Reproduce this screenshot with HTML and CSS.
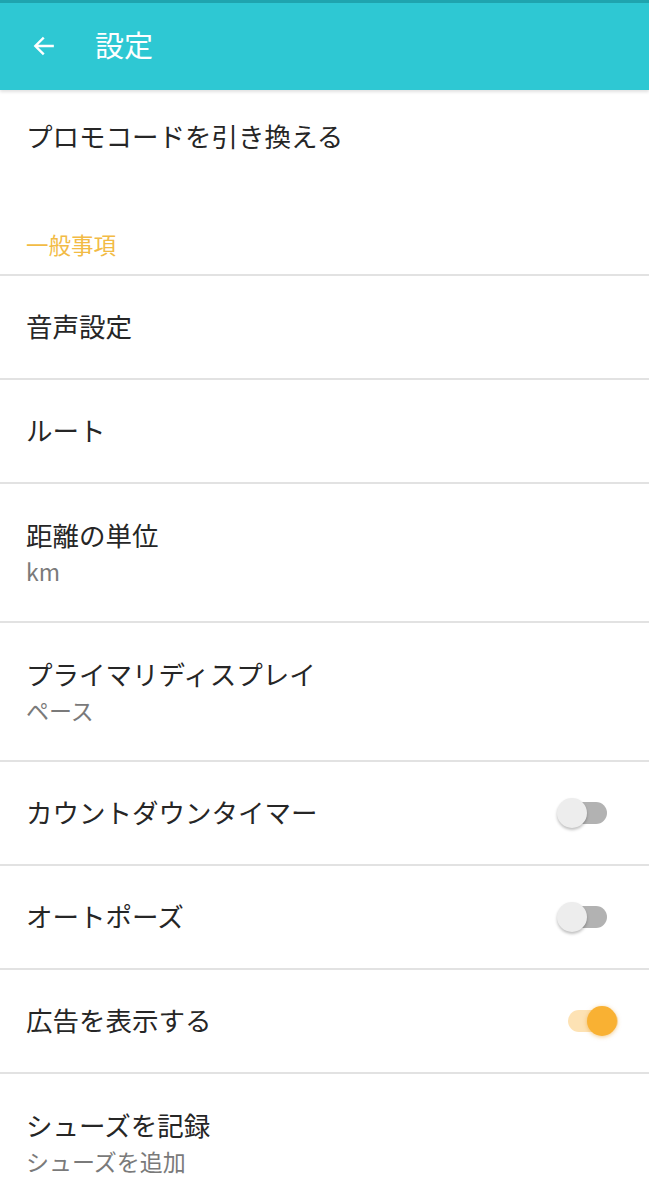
FILE: index.html
```html
<!DOCTYPE html>
<html lang="ja">
<head>
<meta charset="UTF-8">
<meta name="viewport" content="width=device-width, initial-scale=1.0">
<title>設定</title>
<link rel="stylesheet" href="styles.css">
</head>
<body>
<div class="app">
    <header class="toolbar">
        <svg class="back" width="26" height="26" viewBox="0 0 24 24">
            <path d="M20 12H4.5M11 5l-7 7 7 7" fill="none" stroke="#fff" stroke-width="2.2" stroke-linecap="square"/>
        </svg>
        <h1>設定</h1>
    </header>

    <div class="row promo">プロモコードを引き換える</div>

    <div class="category">一般事項</div>

    <div class="row">音声設定</div>
    <div class="row">ルート</div>
    <div class="row two-line">
        <div class="title">距離の単位</div>
        <div class="summary">km</div>
    </div>
    <div class="row two-line">
        <div class="title">プライマリディスプレイ</div>
        <div class="summary">ペース</div>
    </div>
    <div class="row">
        <span>カウントダウンタイマー</span>
        <div class="switch"><div class="track"></div><div class="thumb"></div></div>
    </div>
    <div class="row">
        <span>オートポーズ</span>
        <div class="switch"><div class="track"></div><div class="thumb"></div></div>
    </div>
    <div class="row">
        <span>広告を表示する</span>
        <div class="switch on"><div class="track"></div><div class="thumb"></div></div>
    </div>
    <div class="row two-line last">
        <div class="title">シューズを記録</div>
        <div class="summary">シューズを追加</div>
    </div>
</div>
</body>
</html>
```

FILE: styles.css
```css
* {
    box-sizing: border-box;
    margin: 0;
    padding: 0;
}

body {
    background: #fff;
    color: #262626;
    font-family: "Noto Sans CJK JP", "Noto Sans", sans-serif;
}

.app {
    width: 649px;
    overflow: hidden;
}

.toolbar {
    height: 90px;
    background: #2ec8d3;
    border-top: 3px solid #1fa4ae;
    display: flex;
    align-items: center;
    padding-left: 31px;
    box-shadow: 0 2px 3px rgba(0, 0, 0, 0.12);
    position: relative;
}

.toolbar .back {
    display: block;
    margin-top: -2px;
}

.toolbar h1 {
    font-size: 29px;
    font-weight: normal;
    color: #fff;
    margin-left: 38px;
    line-height: 1;
    margin-top: -4px;
}

.row {
    height: 104px;
    display: flex;
    align-items: center;
    justify-content: space-between;
    padding: 0 26px 3px;
    font-size: 26.5px;
    border-bottom: 2px solid #e2e2e2;
}

.promo {
    height: 96px;
    border-bottom: none;
    padding-bottom: 5px;
}

.category {
    height: 90px;
    padding: 42px 26px 0;
    font-size: 22.5px;
    color: #f2bb45;
    border-bottom: 2px solid #e2e2e2;
}

.two-line {
    height: 139px;
    flex-direction: column;
    align-items: flex-start;
    justify-content: flex-start;
    padding-top: 33px;
}

.two-line .title {
    line-height: 36px;
}

.two-line .summary {
    font-size: 23px;
    line-height: 36px;
    color: #7a7a7a;
}

.last {
    border-bottom: none;
}

.switch {
    position: relative;
    width: 62px;
    height: 32px;
    margin-right: 4px;
    margin-top: 3px;
}

.switch .track {
    position: absolute;
    left: 8px;
    top: 5px;
    width: 42px;
    height: 22px;
    border-radius: 11px;
    background: #b2b2b2;
}

.switch .thumb {
    position: absolute;
    left: 0;
    top: 1px;
    width: 30px;
    height: 30px;
    border-radius: 50%;
    background: #ededed;
    box-shadow: 0 2px 3px rgba(0, 0, 0, 0.25);
}

.switch.on .track {
    left: 11px;
    width: 50px;
    background: #fde2b4;
}

.switch.on .thumb {
    left: 30px;
    background: #f9b133;
    box-shadow: 0 1px 4px rgba(230, 150, 20, 0.5);
}
```
